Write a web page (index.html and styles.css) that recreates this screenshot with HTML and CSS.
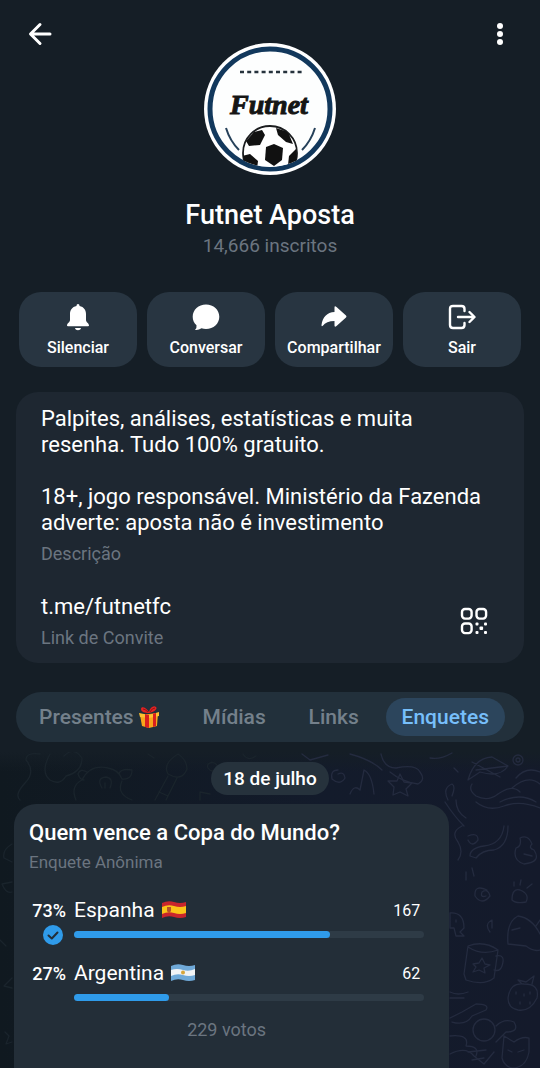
FILE: index.html
```html
<!DOCTYPE html>
<html lang="pt-BR">
<head>
    <meta charset="UTF-8">
    <meta name="viewport" content="width=device-width, initial-scale=1.0">
    <title>Futnet Aposta</title>
    <link rel="stylesheet" href="styles.css">
</head>
<body>

    <!-- Header -->
    <header class="header">
        <button class="icon-btn" aria-label="Voltar">
            <svg width="32" height="32" viewBox="0 0 32 32" fill="none" stroke="#fff" stroke-width="3" stroke-linecap="round" stroke-linejoin="round"><path d="M26 16H7M16 6.500L6.500 16L16 25.500"/></svg>
        </button>
        <svg class="avatar" viewBox="0 0 132 132" role="img" aria-label="Futnet">
            <defs>
                <clipPath id="inner"><circle cx="66" cy="66" r="58"/></clipPath>
                <clipPath id="ball"><circle cx="66" cy="110" r="27"/></clipPath>
            </defs>
            <circle cx="66" cy="66" r="66" fill="#fff"/>
            <circle cx="66" cy="66" r="60" fill="#fdfefe" stroke="#12385c" stroke-width="5"/>
            <path d="M36 29H98" stroke="#26323c" stroke-width="2.400" stroke-dasharray="4 3.200"/>
            <text class="avatar-text" x="65" y="71" text-anchor="middle">Futnet</text>
            <path d="M22 85Q26 98 35 107M111 85Q107 98 98 107" fill="none" stroke="#26415a" stroke-width="2"/>
            <g clip-path="url(#inner)">
                <circle cx="66" cy="110" r="27" fill="#fff" stroke="#1b1d1f" stroke-width="1.800"/>
                <g clip-path="url(#ball)" fill="#111">
                    <path d="M70 101L79 105L78 117L70 123L61 117L62 104Z"/>
                    <path d="M50 89L58 87L61 92L56 102L45 103L42 98Z"/>
                    <path d="M72 85L84 89L89 101L82 99L74 92Z"/>
                    <path d="M92 106L94 120L84 122L85 113Z"/>
                    <path d="M38 113L46 111L54 118L53 126L42 124Z"/>
                </g>
            </g>
        </svg>
        <button class="icon-btn" aria-label="Mais opções">
            <svg width="32" height="32" viewBox="0 0 32 32" fill="#fff"><circle cx="16" cy="8" r="3"/><circle cx="16" cy="16" r="3"/><circle cx="16" cy="24" r="3"/></svg>
        </button>
    </header>
    <h1 class="title">Futnet Aposta</h1>
    <p class="subscribers">14,666 inscritos</p>

    <!-- Actions -->
    <div class="actions">
        <button class="action">
            <svg width="28" height="28" viewBox="0 0 28 28" fill="#fff"><path d="M14 1C15 1 15.500 1.800 15.500 3C20 4 22 7 22 11V17C22 19.500 25 20 25 22.500Q25 23.300 24 23.300H4Q3 23.300 3 22.500C3 20 6 19.500 6 17V11C6 7 8 4 12.500 3C12.500 1.800 13 1 14 1ZM11 25H17C16.500 28 11.500 28 11 25Z"/></svg>
            Silenciar
        </button>
        <button class="action">
            <svg width="28" height="28" viewBox="0 0 28 28" fill="#fff"><path d="M14 1.500C21.500 1.500 27.300 6.800 27.300 13.700S21.500 26 14 26Q11.500 26 9.500 25.300Q6.500 27.500 3 27Q5 25 4.500 22.300C2 20 .700 17 .700 13.700C.700 6.800 6.500 1.500 14 1.500Z"/></svg>
            Conversar
        </button>
        <button class="action">
            <svg width="28" height="28" viewBox="0 0 28 28" fill="#fff"><path d="M14.500 4.500Q14.500 2.500 16.500 4L26 12.500Q27 13.500 26 14.500L16.500 23Q14.500 24.500 14.500 22.500V18C9 18 5 19.500 2.800 22.800Q1.500 24 1.500 22C2.500 14 7 9.500 14.500 9Z"/></svg>
            Compartilhar
        </button>
        <button class="action">
            <svg width="28" height="28" viewBox="0 0 28 28" fill="none" stroke="#fff" stroke-width="2.400" stroke-linecap="round" stroke-linejoin="round"><path d="M16.500 8V6Q16.500 3 13.500 3H5Q2 3 2 6V22Q2 25 5 25H13.500Q16.500 25 16.500 22V20M10 14H26M21.500 9L26.500 14L21.500 19"/></svg>
            Sair
        </button>
    </div>

    <!-- Channel info -->
    <section class="info">
        <p class="info-text">Palpites, análises, estatísticas e muita resenha. Tudo 100% gratuito.<br><br>18+, jogo responsável. Ministério da Fazenda adverte: aposta não é investimento</p>
        <p class="info-label">Descrição</p>
        <div class="invite">
            <div>
                <a class="info-text" href="#convite">t.me/futnetfc</a>
                <p class="info-label">Link de Convite</p>
            </div>
            <button class="icon-btn" aria-label="QR Code">
                <svg width="32" height="32" viewBox="0 0 32 32" fill="none" stroke="#fff" stroke-width="2.400">
                    <rect x="4" y="3" width="9.600" height="9.600" rx="3"/>
                    <rect x="18.500" y="3" width="9.600" height="9.600" rx="3"/>
                    <rect x="4" y="17.500" width="9.600" height="9.600" rx="3"/>
                    <g fill="#fff" stroke="none"><rect x="17.500" y="16.500" width="3" height="3" rx="1"/><rect x="26" y="16.500" width="3" height="3" rx="1"/><rect x="21.500" y="20.500" width="3.600" height="3.600" rx="1"/><rect x="17.500" y="25" width="3" height="3" rx="1"/><rect x="26" y="25" width="3" height="3" rx="1"/></g>
                </svg>
            </button>
        </div>
    </section>

    <!-- Tabs -->
    <nav class="tabs">
        <button class="tab">Presentes
            <svg width="22" height="24" viewBox="0 0 22 24"><path d="M2 10L20 8L19 21L11 23L4 21Z" fill="#f9a51b"/><path d="M1 8L11 10L21 7V11L11 13L2 12Z" fill="#ffc12f"/><path d="M7 9L11 10V23L7 22ZM15 8.500L18 8V21L15 22Z" fill="#d9201f"/><path d="M11 8C7 8 3 7 3 4S8 2 11 7C12 2 16 0 18 2S16 7 11 8Z" fill="#e32222"/><path d="M10 7Q7 4 5 4M12 7Q14 3 17 3" stroke="#961414" fill="none"/></svg>
        </button>
        <button class="tab">Mídias</button>
        <button class="tab">Links</button>
        <button class="tab active">Enquetes</button>
    </nav>

    <!-- Polls -->
    <main class="chat">
        <svg class="wallpaper" viewBox="0 0 540 316" preserveAspectRatio="xMaxYMin slice" fill="none" stroke="#242b3f" stroke-width="1.300" stroke-linecap="round" stroke-linejoin="round" aria-hidden="true">
            <g stroke="#1a242c">
                <path d="M40 2Q26 0 26 8Q36 20 25 31Q14 43 20 48M50 2Q40 20 50 28Q60 34 66 24Q82 20 82 6Q74 -6 64 4"/>
                <path d="M76 48Q70 34 82 28Q90 12 108 16Q119 18 122 27Q132 28 132 18Q120 16 119 22M122 29Q116 42 132 48M102 36Q96 26 106 25Q114 26 110 36M87 20Q80 16 78 22Q80 28 84 28M105 31V36"/>
                <path d="M178 2Q162 12 168 22Q182 30 187 17Q187 8 178 2ZM168 24L155 48M177 26L166 48M159 40L168 44M148 2L154 6M243 2Q248 10 256 4"/>
                <path d="M208 12Q216 8 218 16Q212 22 208 16Q206 12 212 10M200 48V40L210 42"/>
                <path d="M12 92Q2 98 4 106L12 110M2 132L12 130M2 132Q6 142 12 140M0 188L6 194M12 226L4 234L12 236M5 280L9 284L6 292L12 290"/>
            </g>
            <path d="M302 2L310 8L328 3M350 2Q372 8 382 18M381 2Q384 16 396 16Q416 12 420 20Q426 28 418 32Q402 30 390 20M430 6Q440 8 452 1"/>
            <path d="M338 18Q330 18 332 27Q340 34 345 26Q344 19 338 22M350 42Q354 32 360 38L364 18Q372 22 374 42M400 22L404 30L412 31L406 37L408 44L400 40L393 43L394 35L388 29L397 29Z"/>
            <path d="M448 48Q442 36 452 32Q456 34 452 44M454 16L458 20M468 28Q474 6 492 5L508 14Q500 26 480 20ZM472 32Q468 38 476 44Q488 50 498 42Q512 32 520 40M472 10L500 25M476 18L508 14M516 26Q526 14 540 20M512 36Q528 22 540 32"/>
            <circle cx="518" cy="8" r="5"/><circle cx="518" cy="8" r="2"/>
            <path d="M445 50Q454 64 464 74M456 48Q456 60 466 66M462 74Q450 80 458 90Q464 100 458 108M476 50Q488 60 504 54Q520 48 540 56M500 50Q520 40 536 50"/>
            <path d="M468 84Q478 80 478 88Q472 96 468 88M504 74Q502 92 484 94Q470 96 470 104L476 106Q482 98 494 98Q508 94 508 74M520 86Q528 82 532 92Q528 96 534 98Q542 110 524 112Q512 108 516 96Q522 94 520 86ZM524 102L532 104"/>
            <path d="M487 138Q474 132 475 144Q482 154 490 144Q488 136 482 140Q480 146 486 144M512 148Q512 136 520 138Q530 142 526 150Q516 152 512 148ZM514 134V130M520 133L521 128M527 136L532 132M466 120V128M472 116L474 124"/>
            <path d="M450 161Q464 160 464 176L460 180L464 184H456L454 176H450ZM456 168V170M490 180Q484 172 492 168V176M508 192Q506 170 518 164Q532 166 540 182M508 192L526 194Q534 200 540 198M512 178L520 176M536 174L540 168"/>
            <path d="M468 194Q484 188 498 198L494 226Q484 234 466 228L464 222ZM468 195Q482 204 498 198M496 204Q506 202 502 214Q500 220 494 218M473 212L479 211L482 206L485 212L490 213L484 216L485 221L479 218L473 220L476 215Z"/>
            <path d="M450 240Q458 244 468 240M450 246H464M508 246Q510 230 524 232Q540 232 537 246Q530 260 518 258Q508 256 508 246ZM522 232L518 228L526 230L534 224L532 232M516 240V242M524 242V244M530 240V242M520 250V252M530 250V252"/>
            <path d="M450 266L462 260L476 252Q490 252 486 258L472 264Q466 274 452 270M450 284Q470 282 466 294Q480 294 476 304M450 302Q466 294 474 304L484 312L494 300"/>
            <circle cx="484" cy="278" r="11"/>
            <path d="M496 274Q504 266 514 270Q520 280 506 280L496 290M502 306L504 284L514 290Q522 284 529 286V300Q526 316 512 316Q504 314 502 306ZM508 298L512 300M518 300L524 298M468 300L486 298M472 308L484 306"/>
        </svg>
        <span class="date">18 de julho</span>
        <section class="poll">
            <h2 class="poll-title">Quem vence a Copa do Mundo?</h2>
            <p class="poll-type">Enquete Anônima</p>

            <div class="option">
                <span class="percent">73%</span>
                <span class="name">Espanha
                    <svg width="24" height="18" viewBox="0 0 24 18"><path d="M0 2Q6 -1 12 1T24 1V16Q18 18 12 16T0 17Z" fill="#c9252c"/><path d="M0 6Q6 3 12 5T24 5V12Q18 14 12 12T0 13Z" fill="#fbc419"/><path d="M5 6H9V10Q7 13 5 10Z" fill="#b6532a"/></svg>
                </span>
                <span class="count">167</span>
                <svg class="check" width="20" height="20" viewBox="0 0 20 20"><circle cx="10" cy="10" r="10" fill="#2f9bea"/><path d="M5.500 10.500L8.800 13.500L14.500 7.500" fill="none" stroke="#232e38" stroke-width="2" stroke-linecap="round" stroke-linejoin="round"/></svg>
                <div class="bar"><div class="fill" style="width: 73%"></div></div>
            </div>

            <div class="option">
                <span class="percent">27%</span>
                <span class="name">Argentina
                    <svg width="24" height="18" viewBox="0 0 24 18"><path d="M0 2Q6 -1 12 1T24 1V16Q18 18 12 16T0 17Z" fill="#6fa9d8"/><path d="M0 6Q6 4 12 6T24 5V11Q18 13 12 11T0 12Z" fill="#f1f3f5"/><circle cx="12" cy="8.500" r="2" fill="#d7a63b"/></svg>
                </span>
                <span class="count">62</span>
                <div class="bar"><div class="fill" style="width: 27%"></div></div>
            </div>

            <p class="votes">229 votos</p>
        </section>
    </main>

</body>
</html>
```
FILE: styles.css
```css
* {
    margin: 0;
    padding: 0;
    box-sizing: border-box;
    font-family: Roboto, sans-serif;
}

body {
    background: #151e26;
    color: #fff;
    min-height: 100vh;
    display: flex;
    flex-direction: column;
}

button {
    background: none;
    border: none;
    color: inherit;
    cursor: pointer;
}

svg {
    flex-shrink: 0;
}

/* Header */
.header {
    display: flex;
    justify-content: space-between;
    align-items: flex-start;
    padding: 18px 24px 0;
}

.icon-btn {
    width: 32px;
    height: 32px;
}

.avatar {
    width: 132px;
    height: 132px;
    margin-top: 25px;
}

.avatar-text {
    font-family: "Liberation Serif", serif;
    font-size: 28px;
    font-weight: bold;
    font-style: italic;
    fill: #151515;
    stroke: #151515;
    stroke-width: 1px;
}

.title {
    margin-top: 24px;
    font-size: 27px;
    line-height: 32px;
    font-weight: 500;
    text-align: center;
}

.subscribers {
    margin-top: 3px;
    font-size: 19px;
    line-height: 24px;
    text-align: center;
    color: #6b7580;
}

/* Action buttons */
.actions {
    display: grid;
    grid-template-columns: repeat(4, 1fr);
    gap: 10px;
    padding: 0 19px;
    margin-top: 34px;
}

.action {
    display: flex;
    flex-direction: column;
    align-items: center;
    gap: 7px;
    padding: 11px 0 9px;
    border-radius: 22px;
    background: #283541;
    font-size: 16px;
    line-height: 20px;
    font-weight: 500;
}

/* Channel info */
.info {
    margin: 25px 16px 0;
    padding: 14px 34px 13px 25px;
    border-radius: 22px;
    background: #1e2731;
}

.info-text {
    font-size: 22px;
    line-height: 26px;
    color: #fff;
    text-decoration: none;
}

.info-label {
    margin-top: 6px;
    font-size: 18px;
    line-height: 24px;
    color: #6b7580;
}

.invite {
    display: flex;
    justify-content: space-between;
    align-items: center;
    margin-top: 28px;
}

/* Tabs */
.tabs {
    display: flex;
    justify-content: space-between;
    align-items: center;
    height: 50px;
    margin: 29px 16px 0;
    padding: 0 19px 0 7px;
    border-radius: 25px;
    background: #22303b;
}

.tab {
    display: flex;
    align-items: center;
    gap: 4px;
    height: 38px;
    padding: 0 16px;
    border-radius: 19px;
    font-size: 21px;
    font-weight: 500;
    color: #74808b;
}

.tab.active {
    background: #2c455c;
    color: #77bffb;
}

/* Polls */
.chat {
    flex: 1;
    position: relative;
    display: flex;
    flex-direction: column;
    margin-top: 10px;
    padding: 10px 14px 0;
    background: linear-gradient(#151e26, transparent 20px), linear-gradient(90deg, #101920, #131b2b 60%, #141a2b);
    overflow: hidden;
}

.wallpaper {
    position: absolute;
    top: 0;
    left: 0;
    width: 100%;
    height: 100%;
}

.date {
    position: relative;
    align-self: center;
    padding: 0 12px;
    border-radius: 17px;
    background: #26323c;
    font-size: 19px;
    line-height: 33px;
    font-weight: 500;
}

.poll {
    position: relative;
    flex: 1;
    width: 85%;
    margin-top: 9px;
    padding: 15px 25px 24px 15px;
    border-radius: 22px 22px 0 0;
    background: #232e38;
}

.poll-title {
    font-size: 22px;
    line-height: 28px;
    font-weight: 500;
}

.poll-type {
    margin: 3px 0 21px;
    font-size: 17px;
    line-height: 24px;
    color: #6b7580;
}

.option {
    display: grid;
    grid-template-columns: 37px 1fr auto;
    column-gap: 8px;
    align-items: center;
}

.option + .option {
    margin-top: 13px;
}

.percent {
    font-size: 18px;
    font-weight: 500;
    text-align: right;
}

.name {
    display: flex;
    align-items: center;
    gap: 7px;
    font-size: 21px;
    line-height: 30px;
}

.count {
    padding-right: 4px;
    font-size: 16px;
}

.check {
    grid-column: 1;
    justify-self: end;
    margin-right: 3px;
}

.bar {
    grid-column: 2 / 4;
    height: 7px;
    margin: 6px 0 7px;
    border-radius: 4px;
    background: #2e3b46;
}

.fill {
    height: 100%;
    border-radius: 4px;
    background: #2f9bea;
}

.votes {
    margin-top: 10px;
    font-size: 18px;
    line-height: 24px;
    text-align: center;
    color: #6b7580;
}
```
